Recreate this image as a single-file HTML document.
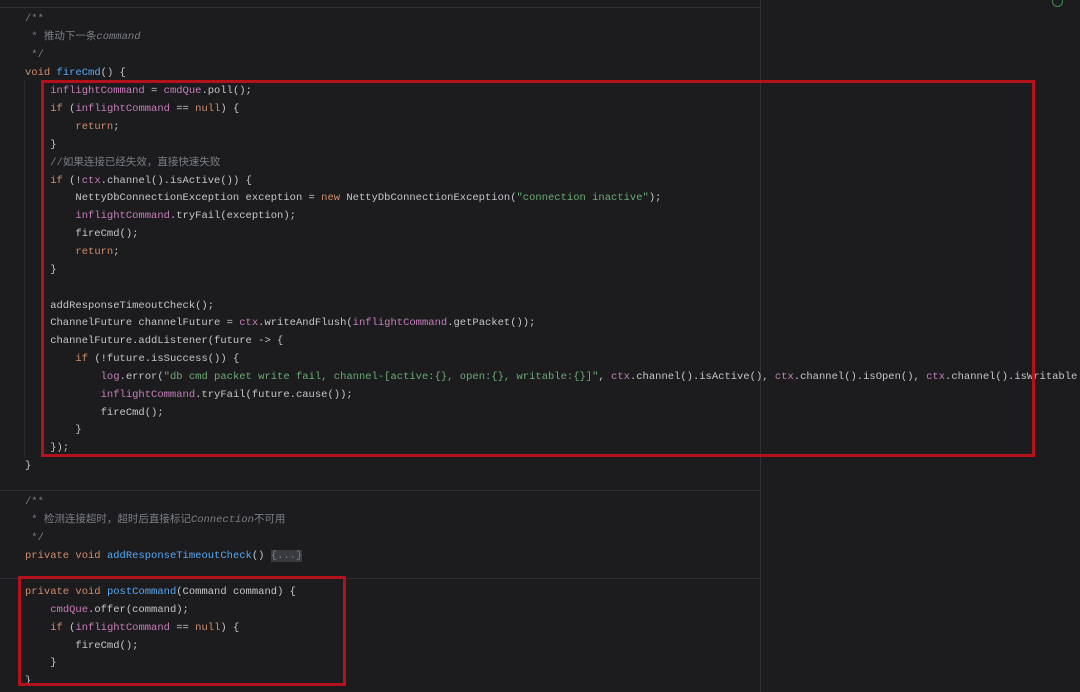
<!DOCTYPE html><html><head><meta charset="utf-8"><style>
body{margin:0;width:1080px;height:692px;background:#1c1c1e;overflow:hidden;position:relative;font-family:"Liberation Mono","Noto Sans CJK SC",monospace;font-size:10.5px;color:#c4c6cc}
.l{position:absolute;left:25px;height:18px;line-height:18px;white-space:pre;margin-top:2px}
.k{color:#cf8e6d}.f{color:#56a8f5}.p{color:#c77dbb}.c{color:#7a7e85}.s{color:#6aab73}
.box{position:absolute;border:3px solid #b3121d;box-sizing:border-box}
.hl{position:absolute;height:1px;background:#2e2f33;left:0;width:760px}
.vl{position:absolute;width:1px;background:#303134}
</style></head><body>
<div class="hl" style="top:7px"></div>
<div class="hl" style="top:490px"></div>
<div class="hl" style="top:578px"></div>
<div class="vl" style="left:760px;top:0;height:692px"></div>
<div class="vl" style="left:24px;top:80px;height:378px;background:#28292c"></div>
<div class="l c" style="top:8px">/**</div>
<div class="l c" style="top:26px"> * 推动下一条<i>command</i></div>
<div class="l c" style="top:44px"> */</div>
<div class="l" style="top:62px"><span class="k">void</span> <span class="f">fireCmd</span>() {</div>
<div class="l" style="top:80px">    <span class="p">inflightCommand</span> = <span class="p">cmdQue</span>.poll();</div>
<div class="l" style="top:98px">    <span class="k">if</span> (<span class="p">inflightCommand</span> == <span class="k">null</span>) {</div>
<div class="l" style="top:116px">        <span class="k">return</span>;</div>
<div class="l" style="top:134px">    }</div>
<div class="l" style="top:152px">    <span class="c">//如果连接已经失效，直接快速失败</span></div>
<div class="l" style="top:170px">    <span class="k">if</span> (!<span class="p">ctx</span>.channel().isActive()) {</div>
<div class="l" style="top:187px">        NettyDbConnectionException exception = <span class="k">new</span> NettyDbConnectionException(<span class="s">"connection inactive"</span>);</div>
<div class="l" style="top:205px">        <span class="p">inflightCommand</span>.tryFail(exception);</div>
<div class="l" style="top:223px">        fireCmd();</div>
<div class="l" style="top:241px">        <span class="k">return</span>;</div>
<div class="l" style="top:259px">    }</div>
<div class="l" style="top:295px">    addResponseTimeoutCheck();</div>
<div class="l" style="top:312px">    ChannelFuture channelFuture = <span class="p">ctx</span>.writeAndFlush(<span class="p">inflightCommand</span>.getPacket());</div>
<div class="l" style="top:330px">    channelFuture.addListener(future -&gt; {</div>
<div class="l" style="top:348px">        <span class="k">if</span> (!future.isSuccess()) {</div>
<div class="l" style="top:366px">            <span class="p">log</span>.error(<span class="s">"db cmd packet write fail, channel-[active:{}, open:{}, writable:{}]"</span>, <span class="p">ctx</span>.channel().isActive(), <span class="p">ctx</span>.channel().isOpen(), <span class="p">ctx</span>.channel().isWritable</div>
<div class="l" style="top:384px">            <span class="p">inflightCommand</span>.tryFail(future.cause());</div>
<div class="l" style="top:402px">            fireCmd();</div>
<div class="l" style="top:419px">        }</div>
<div class="l" style="top:437px">    });</div>
<div class="l" style="top:455px">}</div>
<div class="l c" style="top:491px">/**</div>
<div class="l c" style="top:509px"> * 检测连接超时，超时后直接标记<i>Connection</i>不可用</div>
<div class="l c" style="top:527px"> */</div>
<div class="l" style="top:545px"><span class="k">private void</span> <span class="f">addResponseTimeoutCheck</span>() <span style="background:#393b40;color:#7a7e85">{...}</span></div>
<div class="l" style="top:581px"><span class="k">private void</span> <span class="f">postCommand</span>(Command command) {</div>
<div class="l" style="top:599px">    <span class="p">cmdQue</span>.offer(command);</div>
<div class="l" style="top:617px">    <span class="k">if</span> (<span class="p">inflightCommand</span> == <span class="k">null</span>) {</div>
<div class="l" style="top:635px">        fireCmd();</div>
<div class="l" style="top:652px">    }</div>
<div class="l" style="top:670px">}</div>
<div class="box" style="left:41px;top:80px;width:994px;height:377px"></div>
<div class="box" style="left:18px;top:576px;width:328px;height:110px"></div>
<div style="position:absolute;left:1052px;top:-4px;width:9px;height:9px;border:1px solid #3f8a4c;border-radius:50%"></div>
</body></html>
